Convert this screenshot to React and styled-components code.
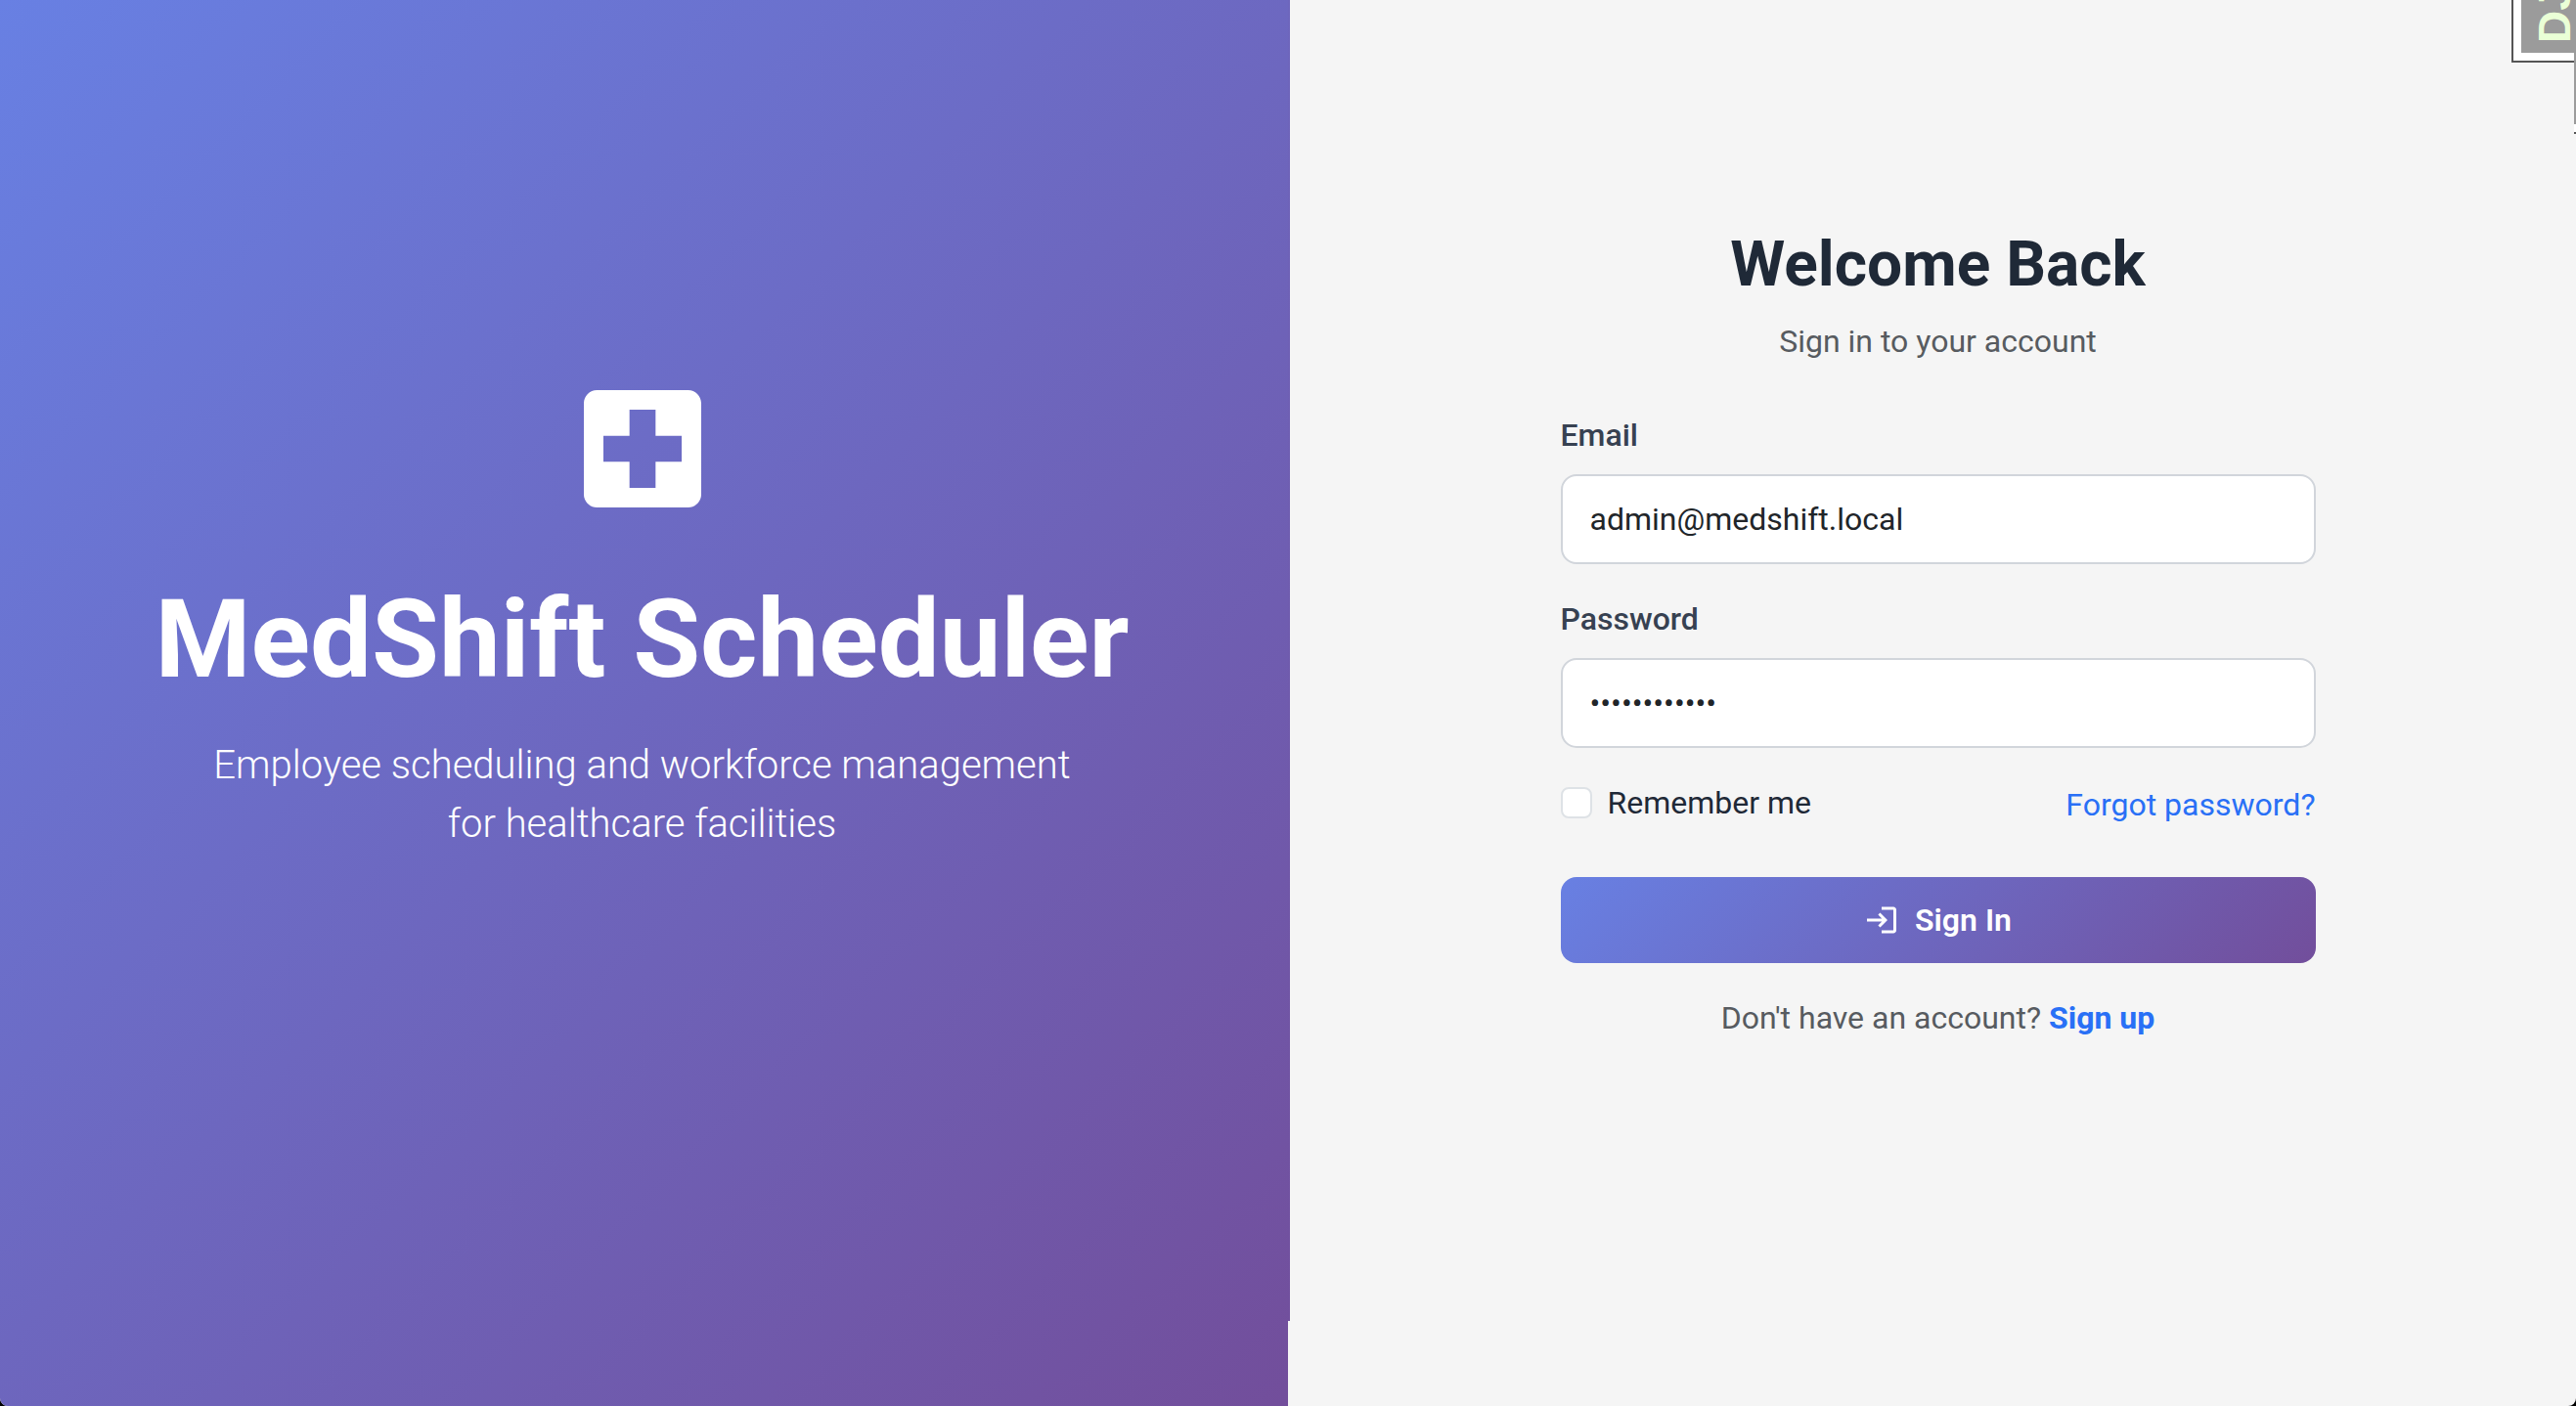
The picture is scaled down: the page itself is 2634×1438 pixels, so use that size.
import React, { useState } from "react";
import styled, { createGlobalStyle } from "styled-components";

const GlobalStyle = createGlobalStyle`
  *, *::before, *::after { box-sizing: border-box; }
  html { background: #000; }
  body {
    margin: 0;
    font-family: Roboto, "Liberation Sans", sans-serif;
    font-size: 32px;
    line-height: 48px;
    color: #1f2937;
  }
`;

const Page = styled.div`
  position: relative;
  display: grid;
  grid-template-columns: 1fr 1fr;
  min-height: 100vh;
  overflow: hidden;
  background: #f5f5f5;
  border-radius: 0 0 8px 8px;
`;

const BrandPanel = styled.section`
  position: relative;
  display: flex;
  flex-direction: column;
  align-items: center;
  justify-content: center;
  padding: 0 4px 186px 0;
  color: #fff;
  text-align: center;
  background: linear-gradient(135deg, #6880e3 0%, #724e9b 100%);

  &::after {
    content: "";
    position: absolute;
    top: 0;
    bottom: 87px;
    left: 100%;
    width: 2px;
    background: linear-gradient(#6d66bd, #714f9d);
  }
`;

const BrandIcon = styled.svg`
  width: 160px;
  height: 160px;
  margin-bottom: 48px;
  fill: currentColor;
`;

const BrandTitle = styled.h1`
  margin: 0 0 32px;
  font-size: 112px;
  line-height: 134px;
  font-weight: 700;
`;

const BrandText = styled.p`
  max-width: 960px;
  margin: 0;
  font-size: 40px;
  line-height: 60px;
  font-weight: 300;
`;

const FormPanel = styled.main`
  display: flex;
  align-items: center;
  justify-content: center;
  padding: 0 0 140px 12px;
`;

const LoginForm = styled.form`
  width: 100%;
  max-width: 772px;
`;

const FormTitle = styled.h2`
  margin: 0 0 16px;
  font-size: 64px;
  line-height: 76px;
  font-weight: 700;
  text-align: center;
`;

const Note = styled.p`
  margin: 0;
  color: #575b60;
  text-align: center;
`;

const Fields = styled.div`
  display: grid;
  gap: 32px;
  margin: 48px 0;
`;

const Field = styled.div`
  display: grid;
  gap: 16px;
`;

const FieldLabel = styled.label`
  font-weight: 500;
  color: #374151;
`;

const TextInput = styled.input`
  width: 100%;
  height: 92px;
  padding: 0 28px;
  border: 2px solid #d1d5db;
  border-radius: 16px;
  outline: none;
  background: #fff;
  color: #212529;
  font: inherit;
`;

const Options = styled.div`
  display: flex;
  align-items: flex-start;
  justify-content: space-between;
  line-height: 52px;
`;

const Remember = styled.label`
  display: flex;
  align-items: center;
  gap: 16px;
  line-height: 48px;
`;

const Checkbox = styled.input`
  appearance: none;
  width: 32px;
  height: 32px;
  margin: 0;
  border: 2px solid #dee2e6;
  border-radius: 8px;
  background: #fff;

  &:checked {
    background: #667eea;
  }
`;

const Link = styled.a`
  color: #2970f6;
  font-weight: ${(p) => (p.$strong ? 700 : 400)};
  text-decoration: none;
`;

const SubmitButton = styled.button`
  display: flex;
  align-items: center;
  justify-content: center;
  gap: 16px;
  width: 100%;
  height: 88px;
  margin-bottom: 32px;
  padding: 0;
  border: 0;
  border-radius: 16px;
  background: linear-gradient(135deg, #6880e3 0%, #724e9b 100%);
  color: #fff;
  font: inherit;
  font-weight: 600;
`;

const ButtonIcon = styled.svg`
  width: 36px;
  height: 36px;
  fill: currentColor;
`;

const DebugHandle = styled.button`
  position: absolute;
  top: -80px;
  right: -60px;
  width: 126px;
  height: 144px;
  padding: 0;
  border: 2px solid #555;
  background: #fff;
`;

const DebugLabel = styled.span`
  position: absolute;
  inset: 0 0 8px 8px;
  display: flex;
  padding: 10px 9px 0 0;
  background: #9b9b9b;
  color: #eaffd6;
  font-family: "Liberation Sans", sans-serif;
  font-size: 46px;
  line-height: 50px;
  font-weight: 700;
  writing-mode: vertical-rl;
  transform: rotate(180deg);
`;

const DebugEdge = styled.div`
  position: absolute;
  top: 0;
  right: 0;
  width: 2px;
  height: 137px;
  border-bottom: 2px solid #555;
  background: linear-gradient(#9b9b9b 127px, #fff 127px);
`;

export default function App() {
  const [email, setEmail] = useState("admin@medshift.local");
  const [password, setPassword] = useState("medshift-123");

  return (
    <>
      <GlobalStyle />
      <Page>
        <BrandPanel>
          <BrandIcon viewBox="0 0 24 24" aria-hidden="true">
            <path d="M19 3H5c-1.1 0-2 .9-2 2v14c0 1.1.9 2 2 2h14c1.1 0 2-.9 2-2V5c0-1.1-.9-2-2-2zm-1 11h-4v4h-4v-4H6v-4h4V6h4v4h4v4z" />
          </BrandIcon>
          <BrandTitle>MedShift Scheduler</BrandTitle>
          <BrandText>
            Employee scheduling and workforce management
            <br />
            for healthcare facilities
          </BrandText>
        </BrandPanel>
        <FormPanel>
          <LoginForm onSubmit={(e) => e.preventDefault()}>
            <FormTitle>Welcome Back</FormTitle>
            <Note>Sign in to your account</Note>
            <Fields>
              <Field>
                <FieldLabel htmlFor="email">Email</FieldLabel>
                <TextInput
                  id="email"
                  type="email"
                  value={email}
                  onChange={(e) => setEmail(e.target.value)}
                />
              </Field>
              <Field>
                <FieldLabel htmlFor="password">Password</FieldLabel>
                <TextInput
                  id="password"
                  type="password"
                  value={password}
                  onChange={(e) => setPassword(e.target.value)}
                />
              </Field>
              <Options>
                <Remember htmlFor="remember">
                  <Checkbox id="remember" type="checkbox" />
                  Remember me
                </Remember>
                <Link href="#forgot">Forgot password?</Link>
              </Options>
            </Fields>
            <SubmitButton type="submit">
              <ButtonIcon viewBox="0 0 24 24" aria-hidden="true">
                <path d="M11 7 9.6 8.4l2.6 2.6H2v2h10.2l-2.6 2.6L11 17l5-5-5-5zm9 12h-8v2h8c1.1 0 2-.9 2-2V5c0-1.1-.9-2-2-2h-8v2h8v14z" />
              </ButtonIcon>
              Sign In
            </SubmitButton>
            <Note>
              Don't have an account?{" "}
              <Link href="#signup" $strong>
                Sign up
              </Link>
            </Note>
          </LoginForm>
        </FormPanel>
        <DebugHandle type="button">
          <DebugLabel>DJ</DebugLabel>
        </DebugHandle>
        <DebugEdge />
      </Page>
    </>
  );
}
